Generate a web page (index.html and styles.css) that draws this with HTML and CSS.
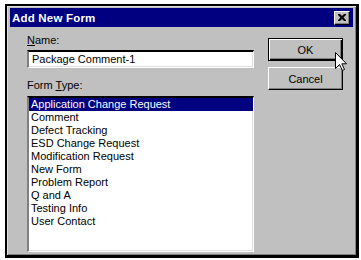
FILE: index.html
```html
<!DOCTYPE html>
<html lang="en">
<head>
    <meta charset="UTF-8">
    <meta name="viewport" content="width=device-width, initial-scale=1.0">
    <title>Add New Form</title>
    <link rel="stylesheet" href="styles.css">
</head>
<body>
    <div class="dialog">
        <div class="title-bar">
            <span class="title">Add New Form</span>
            <span class="close-btn">
                <svg width="8" height="7" viewBox="0 0 8 7">
                    <path d="M0 0h2l2 2 2-2h2v1L5.5 3.5 8 6v1H6L4 5 2 7H0V6l2.5-2.5L0 1z" fill="#000"/>
                </svg>
            </span>
        </div>

        <div class="content">
            <div class="fields">
                <div class="label label-name"><u>N</u>ame:</div>
                <div class="text-input">Package Comment-1</div>

                <div class="label label-type">Form <u>T</u>ype:</div>
                <ul class="list-box">
                    <li class="selected">Application Change Request</li>
                    <li>Comment</li>
                    <li>Defect Tracking</li>
                    <li>ESD Change Request</li>
                    <li>Modification Request</li>
                    <li>New Form</li>
                    <li>Problem Report</li>
                    <li>Q and A</li>
                    <li>Testing Info</li>
                    <li>User Contact</li>
                </ul>
            </div>

            <div class="buttons">
                <button class="btn btn-default">OK</button>
                <button class="btn">Cancel</button>
                <svg class="cursor" width="13" height="20" viewBox="0 0 13 20">
                    <path d="M0.5 0.5 L0.5 16.5 L4.5 12.5 L7.5 18.5 L9.5 17.5 L6.8 11.8 L11.5 11.8 Z" fill="#fff" stroke="#000" stroke-width="1"/>
                </svg>
            </div>
        </div>
    </div>
</body>
</html>
```

FILE: styles.css
```css
body {
    margin: 0;
    padding: 0;
    background-color: #fff;
    font-family: "Liberation Sans", Arial, sans-serif;
    font-size: 11px;
    color: #000;
}

.dialog {
    box-sizing: border-box;
    width: 354px;
    height: 254px;
    margin: 4px 0 0 5px;
    padding: 2px 3px 0 3px;
    background-color: #c0c0c0;
    border: 2px solid #000;
    border-right-width: 3px;
    border-bottom-width: 3px;
    box-shadow: inset 1px 1px #dfdfdf, inset -1px -1px #808080;
}

.title-bar {
    display: flex;
    align-items: center;
    justify-content: space-between;
    height: 19px;
    padding: 0 3px 0 2px;
    background-color: #000080;
}

.title {
    color: #fff;
    font-weight: bold;
    font-size: 11.5px;
    letter-spacing: 0.2px;
}

.close-btn {
    display: flex;
    align-items: center;
    justify-content: center;
    box-sizing: border-box;
    width: 16px;
    height: 14px;
    background-color: #c0c0c0;
    border-top: 1px solid #fff;
    border-left: 1px solid #fff;
    border-right: 1px solid #000;
    border-bottom: 1px solid #000;
    box-shadow: inset -1px -1px #808080;
}

.content {
    display: flex;
    padding-left: 17px;
}

.fields {
    width: 227px;
}

.label {
    height: 13px;
    line-height: 13px;
}

.label-name {
    margin-top: 7px;
}

.label-type {
    margin-top: 11px;
}

.text-input {
    box-sizing: border-box;
    height: 18px;
    margin-top: 3px;
    padding: 0 3px;
    line-height: 14px;
    background-color: #fff;
    border-top: 2px solid #000;
    border-left: 2px solid #808080;
    border-right: 1px solid #fff;
    border-bottom: 1px solid #fff;
    box-shadow: inset -1px -1px #dfdfdf;
    white-space: nowrap;
}

.list-box {
    box-sizing: border-box;
    height: 156px;
    margin: 4px 0 0 0;
    padding: 0;
    list-style: none;
    background-color: #fff;
    border-top: 2px solid #000;
    border-left: 2px solid #808080;
    border-right: 1px solid #fff;
    border-bottom: 1px solid #fff;
    box-shadow: inset -1px -1px #dfdfdf;
}

.list-box li {
    height: 13px;
    line-height: 13px;
    padding-left: 2px;
    white-space: nowrap;
}

.list-box li.selected {
    background-color: #000080;
    color: #fff;
}

.buttons {
    position: relative;
    display: flex;
    flex-direction: column;
    gap: 6px;
    margin: 11px 0 0 14px;
}

.btn {
    box-sizing: border-box;
    width: 75px;
    height: 23px;
    padding: 0;
    font-family: "Liberation Sans", Arial, sans-serif;
    font-size: 11px;
    color: #000;
    background-color: #c0c0c0;
    border-top: 1px solid #fff;
    border-left: 1px solid #fff;
    border-right: 1px solid #000;
    border-bottom: 1px solid #000;
    box-shadow: inset -1px -1px #808080;
}

.btn-default {
    border: 1px solid #000;
    box-shadow: inset 1px 1px #fff, inset -1px -1px #000, inset -2px -2px #808080;
}

.cursor {
    position: absolute;
    left: 67px;
    top: 14px;
}
```
